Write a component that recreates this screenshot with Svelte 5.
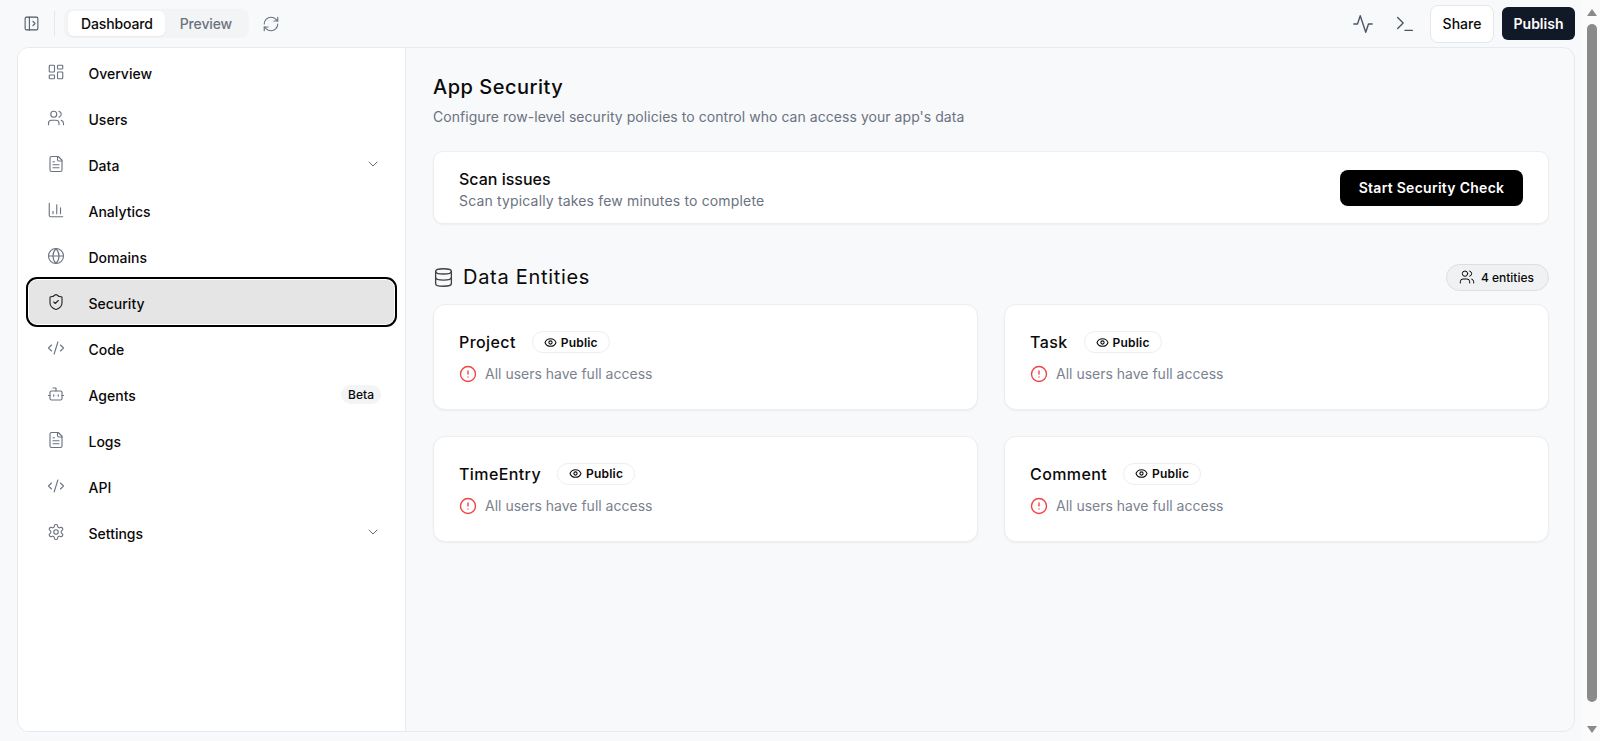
<script>
  const icons = {
    overview: '<rect x="3" y="3" width="7" height="9" rx="1"/><rect x="14" y="3" width="7" height="5" rx="1"/><rect x="14" y="12" width="7" height="9" rx="1"/><rect x="3" y="16" width="7" height="5" rx="1"/>',
    users: '<path d="M16 21v-2a4 4 0 0 0-4-4H6a4 4 0 0 0-4 4v2"/><circle cx="9" cy="7" r="4"/><path d="M22 21v-2a4 4 0 0 0-3-3.87"/><path d="M16 3.13a4 4 0 0 1 0 7.75"/>',
    file: '<path d="M15 2H6a2 2 0 0 0-2 2v16a2 2 0 0 0 2 2h12a2 2 0 0 0 2-2V7Z"/><path d="M14 2v4a2 2 0 0 0 2 2h4"/><path d="M10 9H8"/><path d="M16 13H8"/><path d="M16 17H8"/>',
    chart: '<path d="M3 3v16a2 2 0 0 0 2 2h16"/><path d="M18 17V9"/><path d="M13 17V5"/><path d="M8 17v-3"/>',
    globe: '<circle cx="12" cy="12" r="10"/><path d="M12 2a14.5 14.5 0 0 0 0 20 14.5 14.5 0 0 0 0-20"/><path d="M2 12h20"/>',
    shield: '<path d="M20 13c0 5-3.5 7.5-7.66 8.95a1 1 0 0 1-.67-.01C7.5 20.5 4 18 4 13V6a1 1 0 0 1 1-1c2 0 4.5-1.2 6.24-2.72a1.17 1.17 0 0 1 1.52 0C14.51 3.81 17 5 19 5a1 1 0 0 1 1 1z"/><path d="m9 12 2 2 4-4"/>',
    code: '<path d="m18 16 4-4-4-4"/><path d="m6 8-4 4 4 4"/><path d="m14.5 4-5 16"/>',
    bot: '<path d="M12 8V4H8"/><rect x="4" y="8" width="16" height="12" rx="2"/><path d="M2 14h2"/><path d="M20 14h2"/><path d="M15 13v2"/><path d="M9 13v2"/>',
    settings: '<path d="M12.22 2h-.44a2 2 0 0 0-2 2v.18a2 2 0 0 1-1 1.73l-.43.25a2 2 0 0 1-2 0l-.15-.08a2 2 0 0 0-2.73.73l-.22.38a2 2 0 0 0 .73 2.73l.15.1a2 2 0 0 1 1 1.72v.51a2 2 0 0 1-1 1.74l-.15.09a2 2 0 0 0-.73 2.73l.22.38a2 2 0 0 0 2.73.73l.15-.08a2 2 0 0 1 2 0l.43.25a2 2 0 0 1 1 1.73V20a2 2 0 0 0 2 2h.44a2 2 0 0 0 2-2v-.18a2 2 0 0 1 1-1.73l.43-.25a2 2 0 0 1 2 0l.15.08a2 2 0 0 0 2.73-.73l.22-.39a2 2 0 0 0-.73-2.73l-.15-.08a2 2 0 0 1-1-1.74v-.5a2 2 0 0 1 1-1.74l.15-.09a2 2 0 0 0 .73-2.73l-.22-.38a2 2 0 0 0-2.73-.73l-.15.08a2 2 0 0 1-2 0l-.43-.25a2 2 0 0 1-1-1.73V4a2 2 0 0 0-2-2z"/><circle cx="12" cy="12" r="3"/>',
    chevron: '<path d="m6 9 6 6 6-6"/>',
    panel: '<rect x="3" y="3" width="18" height="18" rx="2"/><path d="M9 3v18"/><path d="m14 9 3 3-3 3"/>',
    refresh: '<path d="M3 12a9 9 0 0 1 9-9 9.75 9.75 0 0 1 6.74 2.74L21 8"/><path d="M21 3v5h-5"/><path d="M21 12a9 9 0 0 1-9 9 9.75 9.75 0 0 1-6.74-2.74L3 16"/><path d="M8 16H3v5"/>',
    activity: '<path d="M22 12h-4l-3 9L9 3l-3 9H2"/>',
    terminal: '<path d="m4 17 6-6-6-6"/><path d="M12 19h8"/>',
    database: '<ellipse cx="12" cy="5" rx="9" ry="3"/><path d="M3 5v14a9 3 0 0 0 18 0V5"/><path d="M3 12a9 3 0 0 0 18 0"/>',
    eye: '<path d="M2.062 12.348a1 1 0 0 1 0-.696 10.75 10.75 0 0 1 19.876 0 1 1 0 0 1 0 .696 10.75 10.75 0 0 1-19.876 0"/><circle cx="12" cy="12" r="3"/>',
    alert: '<circle cx="12" cy="12" r="10"/><path d="M12 8v4"/><path d="M12 16h.01"/>'
  };

  const nav = [
    { label: "Overview", icon: "overview" },
    { label: "Users", icon: "users" },
    { label: "Data", icon: "file", more: true },
    { label: "Analytics", icon: "chart" },
    { label: "Domains", icon: "globe" },
    { label: "Security", icon: "shield", active: true },
    { label: "Code", icon: "code" },
    { label: "Agents", icon: "bot", badge: "Beta" },
    { label: "Logs", icon: "file" },
    { label: "API", icon: "code" },
    { label: "Settings", icon: "settings", more: true }
  ];

  const entities = ["Project", "Task", "TimeEntry", "Comment"];
</script>

{#snippet icon(name, size, width = 1.5)}
  <svg width={size} height={size} viewBox="0 0 24 24" fill="none" stroke="currentColor" stroke-width={width} stroke-linecap="round" stroke-linejoin="round">{@html icons[name]}</svg>
{/snippet}

<div class="page">
  <div class="app">
    <header>
      <div class="left">
        <span class="toggle">{@render icon("panel", 17)}</span>
        <span class="divider"></span>
        <div class="tabs">
          <span class="tab on">Dashboard</span>
          <span class="tab">Preview</span>
        </div>
        <span class="refresh">{@render icon("refresh", 18)}</span>
      </div>
      <div class="right">
        <span class="tool activity">{@render icon("activity", 22)}</span>
        <span class="tool terminal">{@render icon("terminal", 22)}</span>
        <button class="share">Share</button>
        <button class="publish">Publish</button>
      </div>
    </header>

    <div class="panel">
      <aside>
        {#each nav as item}
          <div class="item" class:active={item.active}>
            <span class="item-icon">{@render icon(item.icon, 18)}</span>
            <span class="item-label">{item.label}</span>
            {#if item.more}
              <span class="chev">{@render icon("chevron", 16)}</span>
            {/if}
            {#if item.badge}
              <span class="beta">{item.badge}</span>
            {/if}
          </div>
        {/each}
      </aside>

      <main>
        <h1>App Security</h1>
        <p class="sub">Configure row-level security policies to control who can access your app's data</p>

        <section class="scan">
          <div class="scan-text">
            <h3>Scan issues</h3>
            <p>Scan typically takes few minutes to complete</p>
          </div>
          <button class="start">Start Security Check</button>
        </section>

        <div class="entities-head">
          <div class="entities-title">
            {@render icon("database", 21)}
            <h2>Data Entities</h2>
          </div>
          <span class="count">{@render icon("users", 16)} 4 entities</span>
        </div>

        <div class="grid">
          {#each entities as name}
            <div class="card">
              <div class="card-top">
                <span class="name">{name}</span>
                <span class="public">{@render icon("eye", 13, 2)} Public</span>
              </div>
              <div class="access">
                <span class="warn">{@render icon("alert", 18, 1.8)}</span>
                All users have full access
              </div>
            </div>
          {/each}
        </div>
      </main>
    </div>
  </div>

  <div class="scrollbar">
    <span class="arrow up"></span>
    <span class="thumb"></span>
    <span class="arrow down"></span>
  </div>
</div>

<style>
  :global(body) {
    margin: 0;
    background: #f8f9fb;
    font-family: Inter, "Liberation Sans", sans-serif;
    color: #0a0a0a;
    overflow: hidden;
  }

  .page {
    display: flex;
    height: 100vh;
  }

  .app {
    flex: 1;
    min-width: 0;
    display: flex;
    flex-direction: column;
    padding: 0 8px 9px 17px;
  }

  header {
    height: 47px;
    flex: none;
    display: flex;
    justify-content: space-between;
    align-items: center;
  }

  .left, .right {
    display: flex;
    align-items: center;
  }

  .toggle {
    display: flex;
    margin-left: 6px;
    color: #4b5563;
  }

  .divider {
    width: 1px;
    height: 25px;
    background: #e5e7eb;
    margin: 0 9px 0 14px;
  }

  .tabs {
    display: flex;
    align-items: center;
    background: #f3f4f6;
    border-radius: 8px;
    padding: 3px 4px;
    height: 29px;
    box-sizing: border-box;
  }

  .tab {
    font-size: 14px;
    font-weight: 500;
    color: #6b7280;
    padding: 0 13px 0 15px;
    line-height: 25px;
    letter-spacing: -0.01em;
  }

  .tab.on {
    background: #fff;
    color: #0a0a0a;
    border-radius: 6px;
    padding: 0 12px 0 13px;
    box-shadow: 0 1px 2px rgba(0, 0, 0, 0.05);
  }

  .refresh {
    display: flex;
    margin-left: 13px;
    color: #6b7280;
  }

  .tool {
    display: flex;
    color: #4b5563;
  }

  .activity { margin-right: 20px; }
  .terminal { margin-right: 14px; }

  button {
    font-family: inherit;
    font-size: 14px;
    border-radius: 6px;
  }

  .share {
    width: 64px;
    height: 38px;
    background: #fff;
    border: 1px solid #e5e7eb;
    border-radius: 8px;
    color: #0a0a0a;
    font-weight: 500;
    margin-right: 8px;
    padding: 0;
  }

  .publish {
    width: 73px;
    height: 33px;
    background: #111827;
    border: none;
    color: #fff;
    font-weight: 600;
    padding: 0;
  }

  .panel {
    flex: 1;
    min-height: 0;
    display: flex;
    border: 1px solid #e5e9f0;
    border-radius: 12px;
    overflow: hidden;
  }

  aside {
    width: 388px;
    flex: none;
    box-sizing: border-box;
    background: #fff;
    border-right: 1px solid #e8eaee;
    padding: 2px 11px 0 11px;
    display: flex;
    flex-direction: column;
    gap: 2px;
  }

  .item {
    height: 44px;
    flex: none;
    display: flex;
    align-items: center;
    padding: 0 13px 0 17.5px;
    border-radius: 8px;
    font-size: 14px;
    font-weight: 500;
  }

  .item.active {
    background: #e5e5e5;
    outline: 2px solid #000;
    outline-offset: 1px;
  }

  .item-icon {
    display: flex;
    color: #6b7280;
    margin-right: 24px;
  }

  .item.active .item-icon {
    color: #262626;
  }

  .item-label {
    flex: 1;
    padding-top: 2px;
  }

  .chev {
    display: flex;
    color: #6b7280;
  }

  .beta {
    font-size: 12px;
    background: #f3f4f6;
    border-radius: 10px;
    padding: 0 7px;
    line-height: 19px;
  }

  main {
    flex: 1;
    min-width: 0;
    padding: 25px 25px 0 27px;
  }

  h1 {
    font-size: 20px;
    font-weight: 500;
    line-height: 28px;
    letter-spacing: 0.5px;
    margin: 0;
  }

  .sub {
    font-size: 14px;
    color: #6b7280;
    line-height: 20px;
    letter-spacing: 0.05px;
    margin: 6px 0 0;
  }

  .scan {
    margin-top: 24px;
    height: 73px;
    box-sizing: border-box;
    display: flex;
    align-items: center;
    justify-content: space-between;
    padding: 0 25px;
    background: #fff;
    border: 1px solid #eceef2;
    border-radius: 10px;
    box-shadow: 0 1px 2px rgba(0, 0, 0, 0.05);
  }

  .scan-text {
    padding-top: 2px;
  }

  h3 {
    font-size: 16px;
    font-weight: 500;
    line-height: 24px;
    margin: 0;
  }

  .scan p {
    font-size: 14px;
    color: #6b7280;
    line-height: 20px;
    letter-spacing: 0.16px;
    margin: 0;
  }

  .start {
    width: 183px;
    height: 36px;
    background: #000;
    color: #fff;
    border: none;
    border-radius: 8px;
    font-weight: 600;
    letter-spacing: 0.27px;
    padding: 0;
  }

  .entities-head {
    margin-top: 39px;
    height: 28px;
    display: flex;
    align-items: center;
    justify-content: space-between;
  }

  .entities-title {
    display: flex;
    align-items: center;
    gap: 9px;
    color: #404040;
  }

  h2 {
    font-size: 20px;
    font-weight: 400;
    color: #0a0a0a;
    letter-spacing: 0.7px;
    margin: 0;
  }

  .count {
    display: flex;
    align-items: center;
    gap: 6px;
    height: 27px;
    box-sizing: border-box;
    padding: 0 14px 0 12px;
    background: #f0f1f3;
    border: 1px solid #dcdee2;
    border-radius: 14px;
    font-size: 12px;
    font-weight: 500;
  }

  .grid {
    margin-top: 13px;
    display: grid;
    grid-template-columns: 1fr 1fr;
    gap: 25.5px 26px;
  }

  .card {
    height: 106px;
    box-sizing: border-box;
    padding: 26px 25px 0;
    background: #fff;
    border: 1px solid #eceef2;
    border-radius: 12px;
    box-shadow: 0 1px 2px rgba(0, 0, 0, 0.05);
  }

  .card-top {
    display: flex;
    align-items: center;
    gap: 16px;
    height: 22px;
  }

  .name {
    font-size: 16px;
    font-weight: 500;
    letter-spacing: 0.4px;
  }

  .public {
    display: flex;
    align-items: center;
    gap: 4px;
    height: 22px;
    box-sizing: border-box;
    padding: 0 11px;
    background: #fff;
    border: 1px solid #eceef2;
    border-radius: 11px;
    font-size: 12px;
    font-weight: 600;
    letter-spacing: 0.2px;
  }

  .access {
    display: flex;
    align-items: center;
    gap: 8px;
    margin-top: 11px;
    font-size: 14px;
    color: #7b8290;
    line-height: 20px;
  }

  .warn {
    display: flex;
    color: #ef4444;
  }

  .scrollbar {
    width: 17px;
    flex: none;
    display: flex;
    flex-direction: column;
    align-items: center;
    padding: 9px 0 8px;
    box-sizing: border-box;
    background: #fbfbfc;
  }

  .arrow {
    width: 0;
    height: 0;
    flex: none;
    border-left: 5px solid transparent;
    border-right: 5px solid transparent;
  }

  .up { border-bottom: 7px solid #8a8a8a; }
  .down { border-top: 7px solid #8a8a8a; }

  .thumb {
    width: 10px;
    margin: 8px 0 24px;
    flex: 1;
    background: #8a8a8a;
    border-radius: 5px;
  }
</style>
